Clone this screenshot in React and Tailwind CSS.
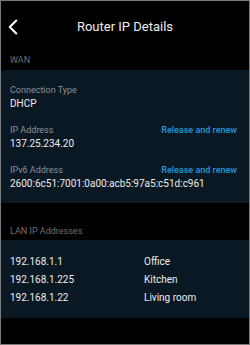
import { ChevronLeft } from "lucide-react";

const wan = [
    { label: "Connection Type", value: "DHCP" },
    { label: "IP Address", value: "137.25.234.20", action: "Release and renew" },
    {
        label: "IPv6 Address",
        value: "2600:6c51:7001:0a00:acb5:97a5:c51d:c961",
        action: "Release and renew",
    },
];

const lan = [
    { ip: "192.168.1.1", name: "Office" },
    { ip: "192.168.1.225", name: "Kitchen" },
    { ip: "192.168.1.22", name: "Living room" },
];

export default function App() {
    return (
        <div
            className="w-[250px] h-[345px] bg-black border border-[#7a7a7a] overflow-hidden"
            style={{ fontFamily: "Roboto, 'Liberation Sans', sans-serif" }}
        >
            {/* Header */}
            <div className="relative h-[52px] flex items-center justify-center">
                <ChevronLeft
                    className="absolute left-[-1px] top-[13px] text-white"
                    size={26}
                    strokeWidth={1.9}
                />
                <h1 className="text-[13px] text-[#ececec]">Router IP Details</h1>
            </div>

            <div className="h-[17px] px-[9px] text-[9px] leading-[14px] text-[#6f6f6f]">
                WAN
            </div>

            {/* WAN panel */}
            <div className="bg-[#0a1824] px-[9px] pt-[13px] pb-[12px] flex flex-col gap-[12px]">
                {wan.map((row) => (
                    <div key={row.label}>
                        <div className="flex justify-between text-[9px] leading-[14px]">
                            <span className="text-[#8a939b]">{row.label}</span>
                            {row.action && (
                                <span className="text-[#1e9ad8] font-medium pr-[3px]">
                                    {row.action}
                                </span>
                            )}
                        </div>
                        <div className="text-[10px] leading-[14px] text-[#ececec]">
                            {row.value}
                        </div>
                    </div>
                ))}
            </div>

            <div className="h-[37px] px-[9px] pb-[2px] flex items-end text-[9px] leading-[14px] text-[#6f6f6f]">
                LAN IP Addresses
            </div>

            {/* LAN panel */}
            <div className="bg-[#0a1824] px-[9px] pt-[13px] pb-[11px]">
                {lan.map((row) => (
                    <div
                        key={row.ip}
                        className="grid grid-cols-[134px_1fr] text-[10px] leading-[18px] text-[#ececec]"
                    >
                        <span>{row.ip}</span>
                        <span>{row.name}</span>
                    </div>
                ))}
            </div>
        </div>
    );
}
